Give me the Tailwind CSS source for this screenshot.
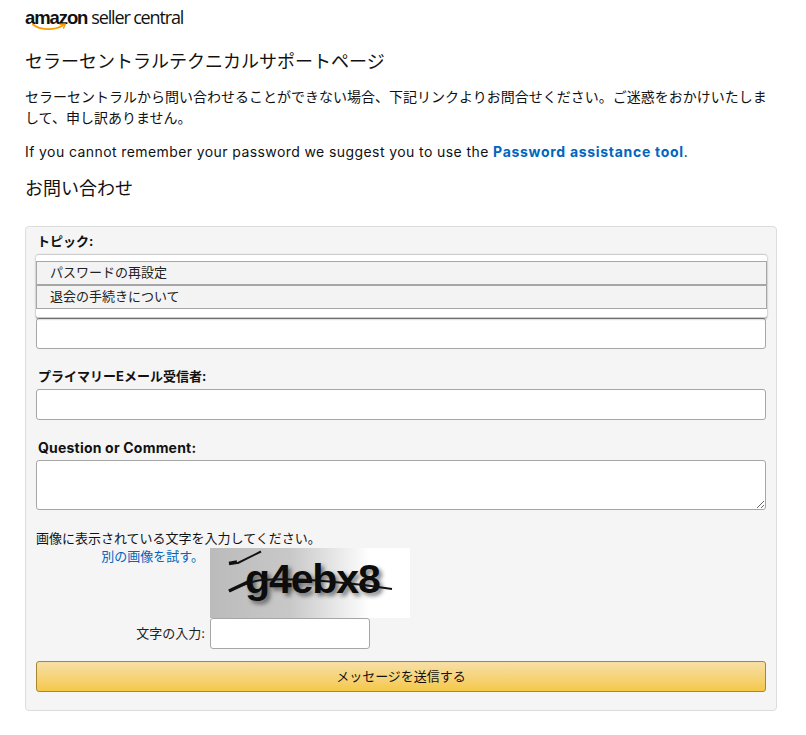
<!DOCTYPE html>
<html lang="ja">
<head>
  <meta charset="UTF-8" />
  <title>セラーセントラルテクニカルサポートページ</title>
  <script src="https://cdn.jsdelivr.net/npm/@tailwindcss/browser@4"></script>
</head>
<body class="bg-white text-[#111] font-['Inter','Noto_Sans_CJK_JP',sans-serif] text-[14px]">
  <div class="pl-[25px] pr-[29px] pb-[24px]">
    <!-- logo -->
    <div class="relative h-[34px] pt-[6px] flex items-baseline leading-[22px] whitespace-nowrap">
      <span class="font-['Liberation_Sans',sans-serif] font-bold text-[18.5px] tracking-[-1.1px] text-[#111]">amazon</span>
      <span class="ml-[4px] font-['Open_Sans',sans-serif] text-[18px] tracking-[-1.15px] text-[#111]">seller central</span>
      <svg class="absolute left-[5px] top-[21px]" width="38" height="11" viewBox="0 0 38 11" fill="none">
        <path d="M3 3.5C10 9 23 10 33 4.5" stroke="#f90" stroke-width="1.8" stroke-linecap="round"/>
        <path d="M30 3.2L35.2 3L33.6 7.2" stroke="#f90" stroke-width="1.4" stroke-linecap="round" stroke-linejoin="round"/>
      </svg>
    </div>

    <h1 class="mt-[15px] text-[18px] leading-[26px] font-normal">セラーセントラルテクニカルサポートページ</h1>
    <p class="mt-[11px] leading-[21px]">セラーセントラルから問い合わせることができない場合、下記リンクよりお問合せください。ご迷惑をおかけいたしまして、申し訳ありません。</p>
    <p class="mt-[13px] leading-[21px] tracking-[0.41px]">If you cannot remember your password we suggest you to use the <a class="font-bold tracking-[0.7px] text-[#0066c0]">Password assistance tool</a>.</p>
    <h2 class="mt-[14px] text-[18px] leading-[26px] font-normal">お問い合わせ</h2>

    <form class="mt-[24px] h-[485px] bg-[#f5f5f5] border border-[#ddd] rounded-[4px] px-[10px]">
      <label class="block mt-[5px] ml-[1px] font-bold text-[13px] leading-[18px]">トピック:</label>
      <div class="relative z-10 mt-[4px] h-[64px] w-[731px] bg-white border border-x-0 border-[#ccc] rounded-[3px] shadow-[0_1px_2px_rgba(0,0,0,0.45)] pt-[6px]">
        <div class="h-[24px] bg-[#f3f3f3] border border-[#a6a6a6] pl-[13px] text-[13px] leading-[20px] text-[#222]">パスワードの再設定</div>
        <div class="h-[24px] bg-[#f3f3f3] border border-[#a6a6a6] pl-[13px] text-[13px] leading-[20px] text-[#222]">退会の手続きについて</div>
      </div>
      <input class="block w-[730px] h-[31px] bg-white border border-[#a6a6a6] rounded-[3px]" />

      <label class="block mt-[18px] ml-[2px] font-bold text-[13px] leading-[18px]">プライマリーEメール受信者:</label>
      <input class="block mt-[4px] w-[730px] h-[31px] bg-white border border-[#a6a6a6] rounded-[3px]" />

      <label class="block mt-[19px] ml-[2px] font-bold text-[14px] tracking-[0.2px] leading-[18px]">Question or Comment:</label>
      <textarea class="block mt-[3px] w-[730px] h-[50px] bg-white border border-[#a6a6a6] rounded-[3px]"></textarea>

      <p class="mt-[19px] text-[13px] leading-[18px]">画像に表示されている文字を入力してください。</p>
      <div class="grid grid-cols-[174px_200px]">
        <a class="block text-right pr-[6px] text-[13px] leading-[18px] text-[#0066c0]">別の画像を試す。</a>
        <!-- captcha image -->
        <div class="relative h-[70px] mt-px overflow-hidden bg-gradient-to-r from-[#bbb] via-[#c8c8c8] via-40% to-white to-80%">
          <span class="absolute left-[35px] top-[6px] font-['Liberation_Sans',sans-serif] font-bold text-[41px] leading-[50px] tracking-[-1.1px] text-[#0c0c0c] [text-shadow:3px_3px_4px_rgba(0,0,0,0.5)]">g4ebx8</span>
          <svg class="absolute inset-0" width="200" height="70" viewBox="0 0 200 70" fill="none">
            <path d="M19 15.5L28 15L51 3.5" stroke="#111" stroke-width="2"/>
            <path d="M19 15.5L27 14" stroke="#111" stroke-width="3.5"/>
            <path d="M19 43C34 36 42 33 52 32C90 29 150 36 182 41" stroke="#111" stroke-width="1.8"/>
            <path d="M19 43L38 34" stroke="#111" stroke-width="3.5"/>
          </svg>
        </div>
        <label class="flex h-[31px] items-center justify-end pr-[5px] text-[13px] text-[#222]">文字の入力:</label>
        <input class="block w-[160px] h-[31px] bg-white border border-[#a6a6a6] rounded-[3px]" />
      </div>
      <button type="button" class="block mt-[12px] w-[730px] h-[31px] border border-[#a88734] rounded-[3px] bg-gradient-to-b from-[#f7dfa5] to-[#f5c845] text-[13px] text-[#111]">メッセージを送信する</button>
    </form>
  </div>
</body>
</html>
